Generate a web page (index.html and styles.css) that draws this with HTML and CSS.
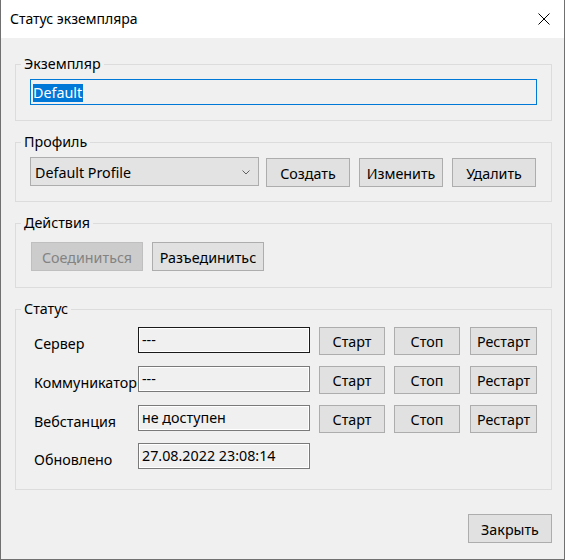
FILE: index.html
```html
<!DOCTYPE html>
<html lang="ru">
<head>
<meta charset="utf-8">
<title>Статус экземпляра</title>
<link rel="stylesheet" href="styles.css">
</head>
<body>
<div class="window">
  <div class="titlebar">
    <span class="title">Статус экземпляра</span>
    <svg class="close" width="12" height="12" viewBox="0 0 12 12"><path d="M0.5 0.5L11.5 11.5M11.5 0.5L0.5 11.5" stroke="#000" stroke-width="1" fill="none"/></svg>
  </div>
  <div class="content">
    <fieldset class="group g-inst">
      <legend>Экземпляр</legend>
      <div class="gbody">
        <div class="edit"><span class="sel">Default</span></div>
      </div>
    </fieldset>

    <fieldset class="group g-prof">
      <legend>Профиль</legend>
      <div class="gbody row">
        <div class="combo">
          <span>Default Profile</span>
          <svg class="chev" width="8" height="5" viewBox="0 0 8 5"><path d="M0.5 0.5L4 4L7.5 0.5" stroke="#606060" stroke-width="1" fill="none"/></svg>
        </div>
        <button class="btn btn-prof first">Создать</button>
        <button class="btn btn-prof">Изменить</button>
        <button class="btn btn-prof">Удалить</button>
      </div>
    </fieldset>

    <fieldset class="group g-act">
      <legend>Действия</legend>
      <div class="gbody row">
        <button class="btn btn-act" disabled>Соединиться</button>
        <button class="btn btn-act second">Разъединитьс</button>
      </div>
    </fieldset>

    <fieldset class="group g-status">
      <legend>Статус</legend>
      <div class="gbody">
        <div class="srow">
          <span class="slabel">Сервер</span>
          <div class="field active">---</div>
          <button class="btn sbtn">Старт</button>
          <button class="btn sbtn">Стоп</button>
          <button class="btn sbtn last">Рестарт</button>
        </div>
        <div class="srow">
          <span class="slabel">Коммуникатор</span>
          <div class="field">---</div>
          <button class="btn sbtn">Старт</button>
          <button class="btn sbtn">Стоп</button>
          <button class="btn sbtn last">Рестарт</button>
        </div>
        <div class="srow">
          <span class="slabel">Вебстанция</span>
          <div class="field">не доступен</div>
          <button class="btn sbtn">Старт</button>
          <button class="btn sbtn">Стоп</button>
          <button class="btn sbtn last">Рестарт</button>
        </div>
        <div class="srow srow-last">
          <span class="slabel">Обновлено</span>
          <div class="field">27.08.2022 23:08:14</div>
        </div>
      </div>
    </fieldset>

    <div class="footer">
      <button class="btn btn-close">Закрыть</button>
    </div>
  </div>
</div>
</body>
</html>
```
FILE: styles.css
```css
* { box-sizing: border-box; }
html, body { margin: 0; padding: 0; background: #ffffff; }
body {
  font-family: "Noto Sans", "Open Sans", sans-serif;
  font-size: 14.3px;
  color: #000;
}
.window {
  width: 565px;
  height: 560px;
  border: 1px solid #707070;
  border-top: none;
  background: #f0f0f0;
  display: flex;
  flex-direction: column;
}
.titlebar {
  height: 38px;
  flex: none;
  background: #ffffff;
  display: flex;
  align-items: center;
  justify-content: space-between;
  padding: 0 14px 0 9px;
}
.title { font-size: 14px; line-height: 18px; }
.close { display: block; }

.content {
  flex: 1;
  padding: 18px 12px 0 14px;
  display: flex;
  flex-direction: column;
}
.group {
  margin: 0;
  padding: 0;
  border: 1px solid #dcdcdc;
  min-width: 0;
}
.group legend {
  margin-left: 5px;
  padding: 0 3px;
  line-height: 16px;
}
.g-prof, .g-act, .g-status { margin-top: 13px; }

.gbody { padding: 0 14px 0 14px; }
.g-inst .gbody { padding-top: 7px; padding-bottom: 15px; }
.edit {
  height: 26px;
  border: 1px solid #0078d7;
  background: #f0f0f0;
  padding: 3px 2px 1px;
  display: flex;
  align-items: center;
}
.sel {
  background: #0078d7;
  color: #fff;
  line-height: 18px;
  padding: 0 1px 0 0;
}

.g-prof .gbody { padding-top: 7px; padding-bottom: 14px; }
.row { display: flex; align-items: flex-start; }
.combo {
  width: 229px;
  height: 29px;
  background: #e3e3e3;
  border: 1px solid #adadad;
  display: flex;
  align-items: center;
  justify-content: space-between;
  padding: 2px 8px 0 4px;
}
.chev { display: block; margin-top: -1px; }
.btn {
  font-family: inherit;
  font-size: 14.3px;
  color: #000;
  background: #e1e1e1;
  border: 1px solid #adadad;
  border-radius: 0;
  padding: 2px 0 0;
  margin: 0;
  line-height: 18px;
}
.btn-prof { width: 84px; height: 29px; margin-top: 1px; margin-left: 9px; }
.btn-prof.first { margin-left: 7px; }

.g-act .gbody { padding-top: 11px; padding-bottom: 16px; padding-left: 15px; }
.btn-act { width: 112px; height: 29px; }
.btn-act.second { margin-left: 9px; }
.btn[disabled] {
  background: #cccccc;
  border-color: #bfbfbf;
  color: #838383;
}

.g-status .gbody { padding-top: 10px; padding-bottom: 20px; padding-left: 18px; }
.srow {
  display: flex;
  align-items: flex-start;
  height: 28px;
}
.srow + .srow { margin-top: 11px; }
.srow.srow-last { margin-top: 10px; height: 26px; }
.slabel {
  width: 104px;
  flex: none;
  white-space: nowrap;
  line-height: 28px;
  margin-top: 3px;
}
.field {
  width: 172px;
  height: 26px;
  flex: none;
  border: 1px solid #7a7a7a;
  box-shadow: inset 1px 1px 0 #ffffff, inset -1px -1px 0 #ffffff;
  background: #f0f0f0;
  padding: 1px 3px 0;
  line-height: 22px;
  white-space: nowrap;
}
.field.active { border-color: #1a1a1a; }
.sbtn { width: 66px; height: 28px; margin-left: 9px; flex: none; }
.sbtn.last { margin-left: 10px; width: 67px; }

.footer {
  display: flex;
  justify-content: flex-end;
  margin-top: 24px;
}
.btn-close { width: 84px; height: 29px; }
```
